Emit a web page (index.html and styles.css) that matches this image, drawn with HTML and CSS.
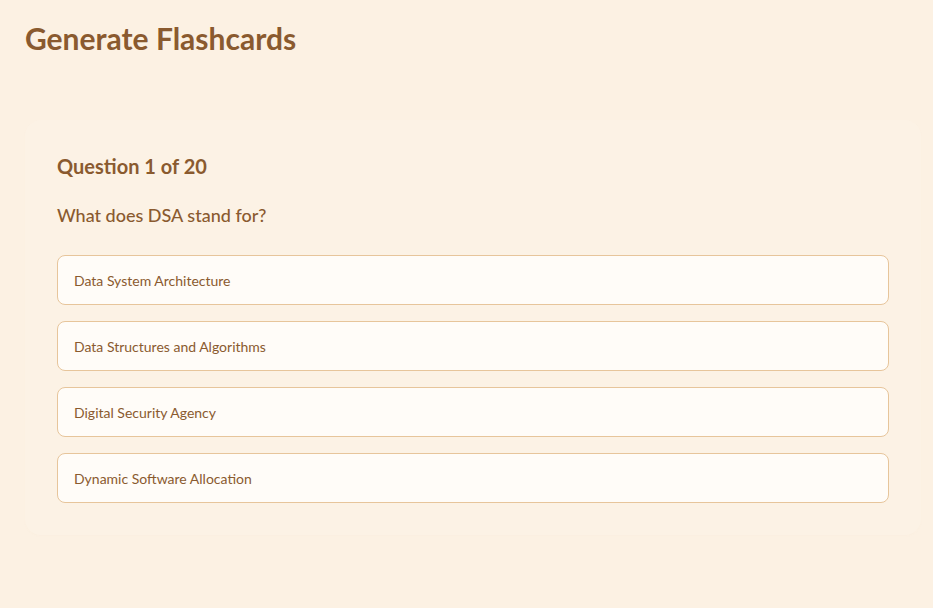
FILE: index.html
```html
<!DOCTYPE html>
<html lang="en">
<head>
<meta charset="utf-8">
<title>Generate Flashcards</title>
<link rel="stylesheet" href="styles.css">
</head>
<body>
<main class="page">
  <h1 class="title">Generate Flashcards</h1>
  <section class="quiz-card">
    <h2 class="counter">Question 1 of 20</h2>
    <p class="question">What does DSA stand for?</p>
    <div class="options">
      <button class="option">Data System Architecture</button>
      <button class="option">Data Structures and Algorithms</button>
      <button class="option">Digital Security Agency</button>
      <button class="option">Dynamic Software Allocation</button>
    </div>
  </section>
</main>
</body>
</html>
```

FILE: styles.css
```css
* { box-sizing: border-box; }
html, body {
  margin: 0;
  height: 100%;
  background: #fcf1e3;
}
body {
  font-family: "Lato", "Noto Sans", sans-serif;
  color: #8a5a2f;
}
.page {
  padding: 18px 12px 0 25px;
}
.title {
  margin: 0;
  font-size: 30px;
  font-weight: 700;
  line-height: 40px;
  color: #8a5a2f;
}
.quiz-card {
  margin-top: 62px;
  padding: 32px;
  background: #fcf2e5;
  border-radius: 16px;
  box-shadow: 0 1px 3px rgba(180, 140, 90, 0.02);
}
.counter {
  margin: 0;
  font-size: 20px;
  line-height: 28px;
  font-weight: 700;
}
.question {
  margin: 22px 0 0;
  font-size: 18px;
  line-height: 26px;
  font-weight: 500;
}
.options {
  margin-top: 27px;
  display: flex;
  flex-direction: column;
  gap: 16px;
}
.option {
  display: block;
  width: 100%;
  height: 50px;
  padding: 0 16px;
  text-align: left;
  font-family: inherit;
  font-size: 14px;
  color: #8a5a2f;
  background: #fffcf8;
  border: 1px solid #e7c59b;
  border-radius: 8px;
}
```
